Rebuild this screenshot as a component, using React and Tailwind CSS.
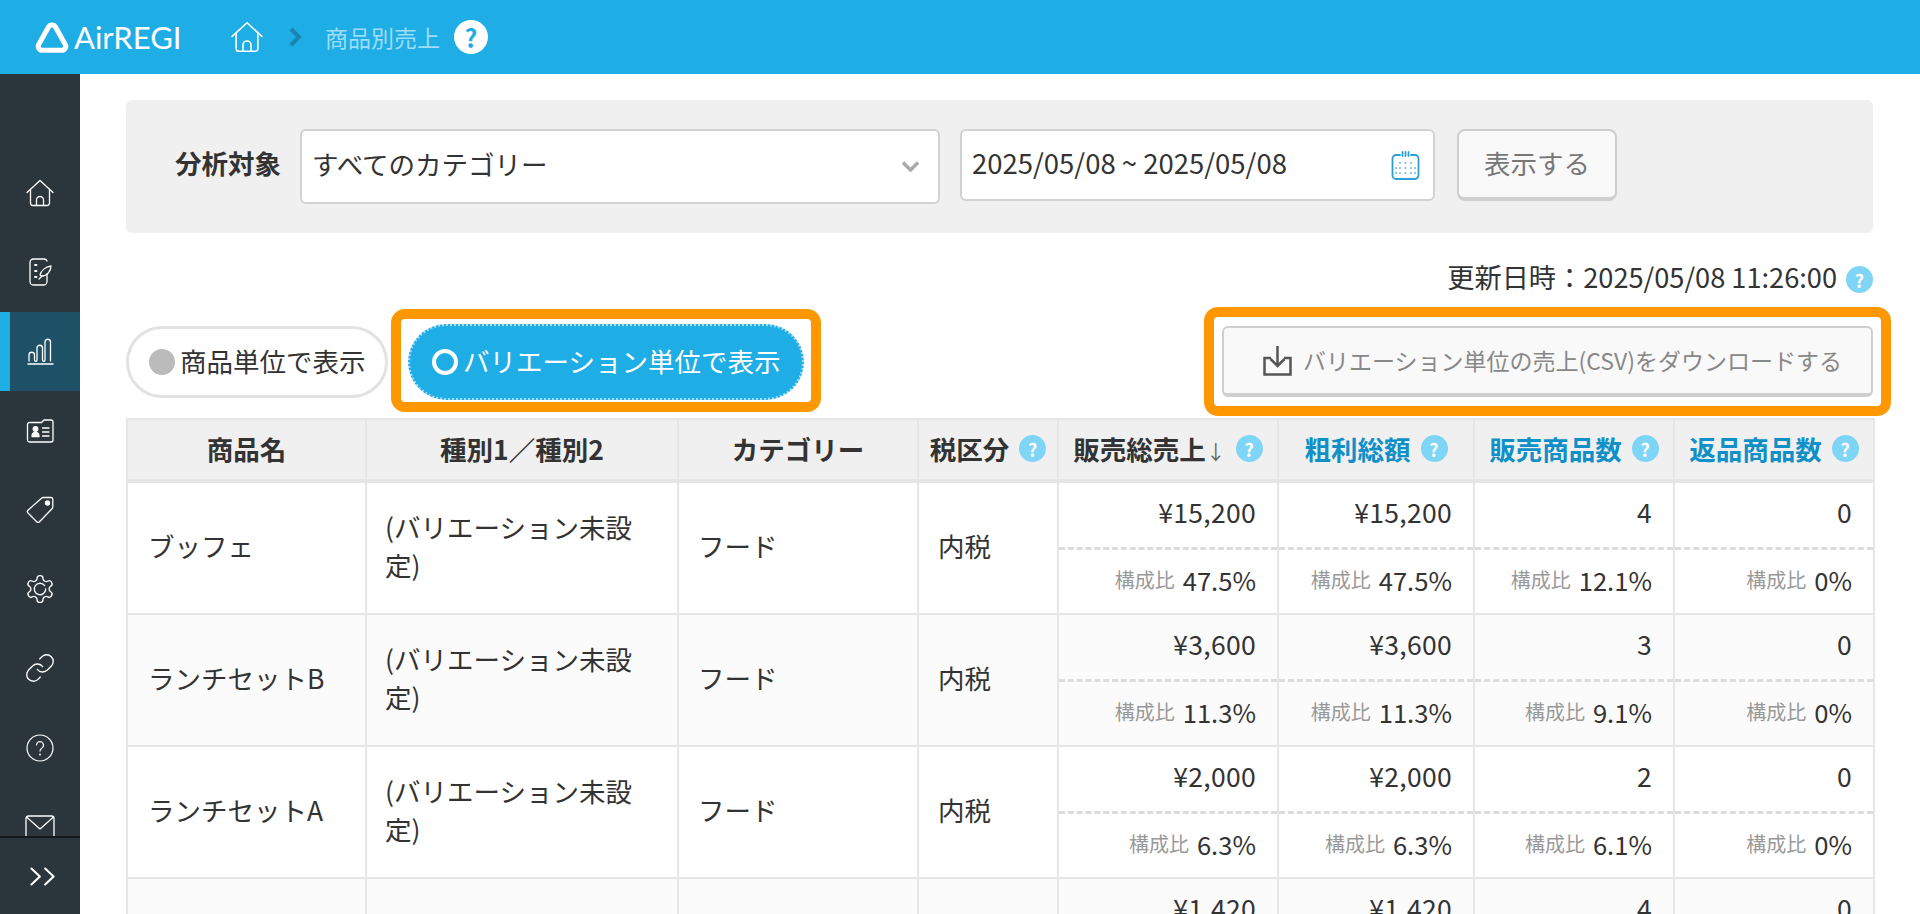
import React from "react";

const navStroke = { fill: "none", stroke: "#fff", strokeWidth: 1.3, strokeLinecap: "round", strokeLinejoin: "round" };

const HomeIcon = ({ className, width = 1.3 }) => (
  <svg viewBox="0 0 28 28" className={className} {...navStroke} strokeWidth={width}>
    <path d="M1 13.5 14 1.5l13 12" />
    <path d="M4.5 11v13a2.5 2.5 0 0 0 2.5 2.5h14a2.5 2.5 0 0 0 2.5-2.5V11" />
    <path d="M10.5 26.5V21a3.5 3.5 0 0 1 7 0v5.5" />
  </svg>
);

const NoteIcon = () => (
  <svg viewBox="0 0 28 28" className="w-7 h-7" {...navStroke}>
    <path d="M21 3V2.9A2.9 2.9 0 0 0 18.5 1H7.5A3.5 3.5 0 0 0 4 4.5v19A3.5 3.5 0 0 0 7.5 27h10a3.5 3.5 0 0 0 3.5-3.500V16" />
    <path d="M9 7h1.500M9 13h1.500M9 19h1.500" strokeWidth="1.8" />
    <path d="M14 17c1-4 5-8 11-9 0 5-4 10-9 10z" />
    <path d="M13 21l3-3" />
  </svg>
);

const ChartIcon = () => (
  <svg viewBox="0 0 28 28" className="w-7 h-7" {...navStroke}>
    <path d="M3 24V18a2.75 2.75 0 0 1 5.500 0v5a1.250 1.250 0 0 0 2.500 0V11a2.750 2.750 0 0 1 5.500 0v12a1.250 1.250 0 0 0 2.500 0V5a2.750 2.750 0 0 1 5.500 0v19" />
    <path d="M2 27h25" />
  </svg>
);

const CardIcon = () => (
  <svg viewBox="0 0 28 28" className="w-7 h-7" {...navStroke}>
    <path d="M3.500 5.500H15.500L18 3h7a2 2 0 0 1 2 2v18a2 2 0 0 1-2 2H3.500a2 2 0 0 1-2-2V7.500a2 2 0 0 1 2-2z" />
    <circle cx="9.500" cy="12" r="2.300" fill="#fff" />
    <path d="M6 19.500c0-3 1.500-4 3.500-4s3.500 1 3.500 4z" fill="#fff" />
    <path d="M16.500 11h6.500M16.500 15h6.500M16.500 19h6.500" />
  </svg>
);

const TagIcon = () => (
  <svg viewBox="0 0 28 28" className="w-7 h-7" {...navStroke}>
    <path d="M17.500 1.500h7.500a1.800 1.800 0 0 1 1.800 1.800V11a2.500 2.500 0 0 1-.8 1.800L13.500 25.700a2 2 0 0 1-2.800 0L2 17a2 2 0 0 1 0-2.800L15.500 2.300a2.500 2.500 0 0 1 2-.8z" />
    <circle cx="21.500" cy="7" r="2" fill="#fff" />
  </svg>
);

const GearIcon = () => (
  <svg viewBox="0 0 24 24" className="w-[32px] h-[32px]" fill="none" stroke="#fff" strokeWidth="1" strokeLinecap="round" strokeLinejoin="round">
    <path d="M12.220 2h-.44a2 2 0 0 0-2 2v.18a2 2 0 0 1-1 1.730l-.43.25a2 2 0 0 1-2 0l-.15-.08a2 2 0 0 0-2.730.73l-.22.38a2 2 0 0 0 .73 2.730l.15.1a2 2 0 0 1 1 1.720v.51a2 2 0 0 1-1 1.740l-.15.09a2 2 0 0 0-.73 2.730l.22.38a2 2 0 0 0 2.730.73l.15-.08a2 2 0 0 1 2 0l.43.25a2 2 0 0 1 1 1.730V20a2 2 0 0 0 2 2h.44a2 2 0 0 0 2-2v-.18a2 2 0 0 1 1-1.730l.43-.25a2 2 0 0 1 2 0l.15.08a2 2 0 0 0 2.730-.73l.22-.39a2 2 0 0 0-.73-2.730l-.15-.08a2 2 0 0 1-1-1.740v-.5a2 2 0 0 1 1-1.740l.15-.09a2 2 0 0 0 .73-2.730l-.22-.38a2 2 0 0 0-2.730-.73l-.15.08a2 2 0 0 1-2 0l-.43-.25a2 2 0 0 1-1-1.730V4a2 2 0 0 0-2-2z" />
    <path d="M15.500 9.500A4.300 4.300 0 1 0 16.300 12" />
  </svg>
);

const LinkIcon = () => (
  <svg viewBox="0 0 24 24" className="w-[32px] h-[32px]" fill="none" stroke="#fff" strokeWidth="1" strokeLinecap="round" strokeLinejoin="round">
    <path d="M10 13a5 5 0 0 0 7.540.54l3-3a5 5 0 0 0-7.070-7.070l-1.720 1.710" />
    <path d="M14 11a5 5 0 0 0-7.540-.54l-3 3a5 5 0 0 0 7.070 7.070l1.710-1.710" />
  </svg>
);

const QuestionIcon = () => (
  <svg viewBox="0 0 28 28" className="w-7 h-7" {...navStroke} strokeWidth="1.200">
    <circle cx="14" cy="14" r="13" />
    <path d="M10.500 11a3.500 3.500 0 1 1 5.500 3c-1.300.9-2 1.600-2 3" />
    <path d="M14 20.500h.01" strokeWidth="1.800" />
  </svg>
);

const MailIcon = () => (
  <svg viewBox="0 0 30 24" className="w-[30px] h-6" {...navStroke}>
    <rect x="1" y="1" width="28" height="22" rx="2.500" />
    <path d="M1.500 2 15 14 28.500 2" />
  </svg>
);

const navItems = [
  { key: "home", icon: <HomeIcon className="w-7 h-7" /> },
  { key: "note", icon: <NoteIcon /> },
  { key: "chart", icon: <ChartIcon />, active: true },
  { key: "card", icon: <CardIcon /> },
  { key: "tag", icon: <TagIcon /> },
  { key: "gear", icon: <GearIcon /> },
  { key: "link", icon: <LinkIcon /> },
  { key: "help", icon: <QuestionIcon /> },
  { key: "mail", icon: <MailIcon /> },
];

const Help = ({ className = "bg-[#7fd5f5] text-white", size = "w-[27px] h-[27px] text-[18px]" }) => (
  <span className={`inline-flex items-center justify-center rounded-full font-bold shrink-0 leading-none ${size} ${className}`}>?</span>
);

const rows = [
  { name: "ブッフェ", sales: "¥15,200", salesPct: "47.5%", profit: "¥15,200", profitPct: "47.5%", qty: "4", qtyPct: "12.1%", ret: "0", retPct: "0%" },
  { name: "ランチセットB", sales: "¥3,600", salesPct: "11.3%", profit: "¥3,600", profitPct: "11.3%", qty: "3", qtyPct: "9.1%", ret: "0", retPct: "0%" },
  { name: "ランチセットA", sales: "¥2,000", salesPct: "6.3%", profit: "¥2,000", profitPct: "6.3%", qty: "2", qtyPct: "6.1%", ret: "0", retPct: "0%" },
  { name: "", sales: "¥1,420", salesPct: "", profit: "¥1,420", profitPct: "", qty: "4", qtyPct: "", ret: "0", retPct: "" },
];

const cellLine = "border-2 border-[#e6e6e6]";

const ValueCell = ({ value, pct }) => (
  <td className={`${cellLine} p-0 align-top`}>
    <div className="h-[67px] flex items-center justify-end pr-[21px] pb-[6px] border-b-[3px] border-dashed border-[#dcdcdc] text-[26.500px] tracking-[0.300px]">{value}</div>
    <div className="h-[63px] flex items-center justify-end gap-2 pr-[21px] pb-[3px] text-[25.600px]">
      {pct && <span className="text-[20px] text-[#999]">構成比</span>}
      {pct}
    </div>
  </td>
);

const HeadCell = ({ children, help, link }) => (
  <th className={`${cellLine} bg-[#f0f0f0] border-b-4 p-0 font-bold ${link ? "text-[#1190c8]" : "text-[#333]"}`}>
    <div className="flex items-center justify-center gap-[10px] pb-[2px]">
      <span className="whitespace-nowrap">{children}</span>
      {help && <Help />}
    </div>
  </th>
);

export default function App() {
  return (
    <div className="h-screen overflow-hidden flex flex-col bg-white text-[#333] text-[26.500px] font-['Noto_Sans_CJK_JP','Noto_Sans',sans-serif]">
      <header className="h-[74px] shrink-0 bg-[#1fade6] flex items-center pl-[35px]">
        <svg viewBox="0 0 34 31" className="w-[34px] h-[31px]" fill="none" stroke="#fff" strokeWidth="5" strokeLinejoin="round">
          <path d="M13.500 5a4 4 0 0 1 7 0L30 22a4 4 0 0 1-3.500 6.300h-19A4 4 0 0 1 4 22z" />
        </svg>
        <span className="ml-[5px] w-[122px] text-white text-[31px] leading-none font-['Lato',sans-serif]">AirREGI</span>
        <HomeIcon className="ml-[35px] w-[32px] h-[32px]" width="1.400" />
        <svg viewBox="0 0 13 20" className="ml-[26px] w-[13px] h-5" fill="none" stroke="#1a85b5" strokeWidth="4">
          <path d="M2 2l8 8-8 8" />
        </svg>
        <span className="ml-[23px] text-[23px] text-[#9fdcf6]">商品別売上</span>
        <Help className="bg-white text-[#1fade6] ml-[14px]" size="w-[34px] h-[34px] text-[25px]" />
      </header>

      <div className="flex-1 min-h-0 flex">
        <aside className="w-20 shrink-0 bg-[#2a363b] flex flex-col">
          <nav className="flex-1 min-h-0 overflow-hidden pt-[79px]">
            {navItems.map((item) => (
              <div
                key={item.key}
                className={`h-[79.300px] flex items-center justify-center ${item.active ? "bg-[#1e5166] border-l-[10px] border-[#1fade6] pr-[10px]" : ""}`}
              >
                {item.icon}
              </div>
            ))}
          </nav>
          <div className="h-[78px] shrink-0 border-t-2 border-[#14191c] flex items-center justify-center pl-[4px]">
            <svg viewBox="0 0 25 18" className="w-[27px] h-[19px]" fill="none" stroke="#fff" strokeWidth="2" strokeLinecap="round" strokeLinejoin="round">
              <path d="M2 1.500 10 9l-8 7.500M15 1.500 23 9l-8 7.500" />
            </svg>
          </div>
        </aside>

        <main className="flex-1 min-w-0 pl-[46px] pr-[47px] pt-[26px]">
          <section className="h-[133px] bg-[#f0f0f0] rounded-md pl-[49px] pt-[29px] flex items-start">
            <div className="w-[105px] h-[67px] flex items-center font-bold whitespace-nowrap">分析対象</div>
            <div className="ml-5 w-[640px] h-[75px] bg-white border-2 border-[#d2d2d2] rounded-md pl-[10px] pr-[18px] pb-[6px] flex items-center justify-between">
              <span>すべてのカテゴリー</span>
              <svg viewBox="0 0 19 11" className="w-[19px] h-[11px] mt-[6px]" fill="none" stroke="#aaa" strokeWidth="3.500">
                <path d="M2 1.500 9.500 9 17 1.500" />
              </svg>
            </div>
            <div className="ml-5 w-[475px] h-[72px] bg-white border-2 border-[#d2d2d2] rounded-md pl-[10px] pr-[13px] flex items-center justify-between">
              <span className="whitespace-nowrap text-[27.500px] pb-[4px]">2025/05/08 ~ 2025/05/08</span>
              <svg viewBox="0 0 29 29" className="w-[29px] h-[29px]" fill="none" stroke="#2a9fd6" strokeWidth="1.800" strokeLinecap="round">
                <path d="M9 4H5a3.500 3.500 0 0 0-3.500 3.500v17A3.500 3.500 0 0 0 5 28h19a3.500 3.500 0 0 0 3.500-3.500v-17A3.500 3.500 0 0 0 24 4h-4" />
                <path d="M11.500 1v4M14.500 1v4M17.500 1v4" />
                <path d="M9 12h.01M14.500 12h.01M20 12h.01M9 17h.01M14.500 17h.01M20 17h.01M9 22h.01M14.500 22h.01M20 22h.01M5 17h.01M5 22h.01M24 17h.01M24 22h.01" strokeWidth="2" opacity="0.700" />
              </svg>
            </div>
            <button className="ml-[22px] w-40 h-[72px] bg-[#f9f9f9] border-2 border-b-4 border-[#cfcfcf] rounded-lg text-[#777] pb-[2px]">表示する</button>
          </section>

          <div className="h-[74px] flex items-end justify-end gap-[9px] pb-[14px] text-[27.200px] leading-[27px]">
            <span className="whitespace-nowrap pb-[3px]">更新日時：2025/05/08 11:26:00</span>
            <Help />
          </div>

          <div className="h-[111px] flex items-start">
            <button className="mt-[19px] w-[262px] h-[72px] bg-white border-[3px] border-[#e2e2e2] rounded-full flex items-center pl-5 gap-[5px] whitespace-nowrap">
              <span className="w-[26px] h-[26px] rounded-full bg-[#bbb]" />
              <span className="pb-[3px]">商品単位で表示</span>
            </button>
            <div className="ml-[3px] mt-[2px] w-[430px] h-[103px] border-[10px] border-[#ff9800] rounded-[14px] pl-[7px] pt-[5px]">
              <button className="w-[396px] h-[76px] bg-[#1fade6] border-2 border-dotted border-[#a5dcf5] rounded-full text-white flex items-center pl-[22px] gap-[5px] whitespace-nowrap">
                <span className="w-[26px] h-[26px] rounded-full border-[4px] border-white" />
                <span className="pb-[3px]">バリエーション単位で表示</span>
              </button>
            </div>
            <div className="ml-auto -mr-[18px] w-[687px] h-[109px] border-[10px] border-[#ff9800] rounded-[14px] pl-2 pt-[9px]">
              <button className="w-[651px] h-[71px] bg-[#f9f9f9] border-2 border-b-4 border-[#cfcfcf] rounded-md text-[#888] text-[23px] flex items-center pl-[39px] gap-[11px] whitespace-nowrap">
                <svg viewBox="0 0 29 30" className="w-[29px] h-[30px] shrink-0" fill="none" stroke="#555" strokeWidth="2.500">
                  <path d="M8 12H1.500v16.500h26V12H21" />
                  <path d="M14.500 0v20M7.500 13l7 7 7-7" />
                </svg>
                バリエーション単位の売上(CSV)をダウンロードする
              </button>
            </div>
          </div>

          <table className="w-[1747px] table-fixed border-collapse">
            <colgroup>
              <col className="w-[239px]" />
              <col className="w-[312px]" />
              <col className="w-[240px]" />
              <col className="w-[140px]" />
              <col className="w-[220px]" />
              <col className="w-[196px]" />
              <col className="w-[200px]" />
              <col className="w-[200px]" />
            </colgroup>
            <thead>
              <tr className="h-[62px]">
                <HeadCell>商品名</HeadCell>
                <HeadCell>種別1／種別2</HeadCell>
                <HeadCell>カテゴリー</HeadCell>
                <HeadCell help>税区分</HeadCell>
                <HeadCell help>販売総売上<span className="font-normal text-[#666] text-[20px]">↓</span></HeadCell>
                <HeadCell help link>粗利総額</HeadCell>
                <HeadCell help link>販売商品数</HeadCell>
                <HeadCell help link>返品商品数</HeadCell>
              </tr>
            </thead>
            <tbody>
              {rows.map((row, i) => (
                <tr key={i} className={`h-[132px] ${i % 2 === 1 ? "bg-[#fbfbfb]" : "bg-white"}`}>
                  <td className={`${cellLine} pl-5 pr-4 pb-1`}>{row.name}</td>
                  <td className={`${cellLine} pl-[18px] pr-[21px] pb-1 leading-[38px]`}>{row.name && "(バリエーション未設定)"}</td>
                  <td className={`${cellLine} px-[19px] pb-1`}>{row.name && "フード"}</td>
                  <td className={`${cellLine} px-[19px] pb-1`}>{row.name && "内税"}</td>
                  <ValueCell value={row.sales} pct={row.salesPct} />
                  <ValueCell value={row.profit} pct={row.profitPct} />
                  <ValueCell value={row.qty} pct={row.qtyPct} />
                  <ValueCell value={row.ret} pct={row.retPct} />
                </tr>
              ))}
            </tbody>
          </table>
        </main>
      </div>
    </div>
  );
}
